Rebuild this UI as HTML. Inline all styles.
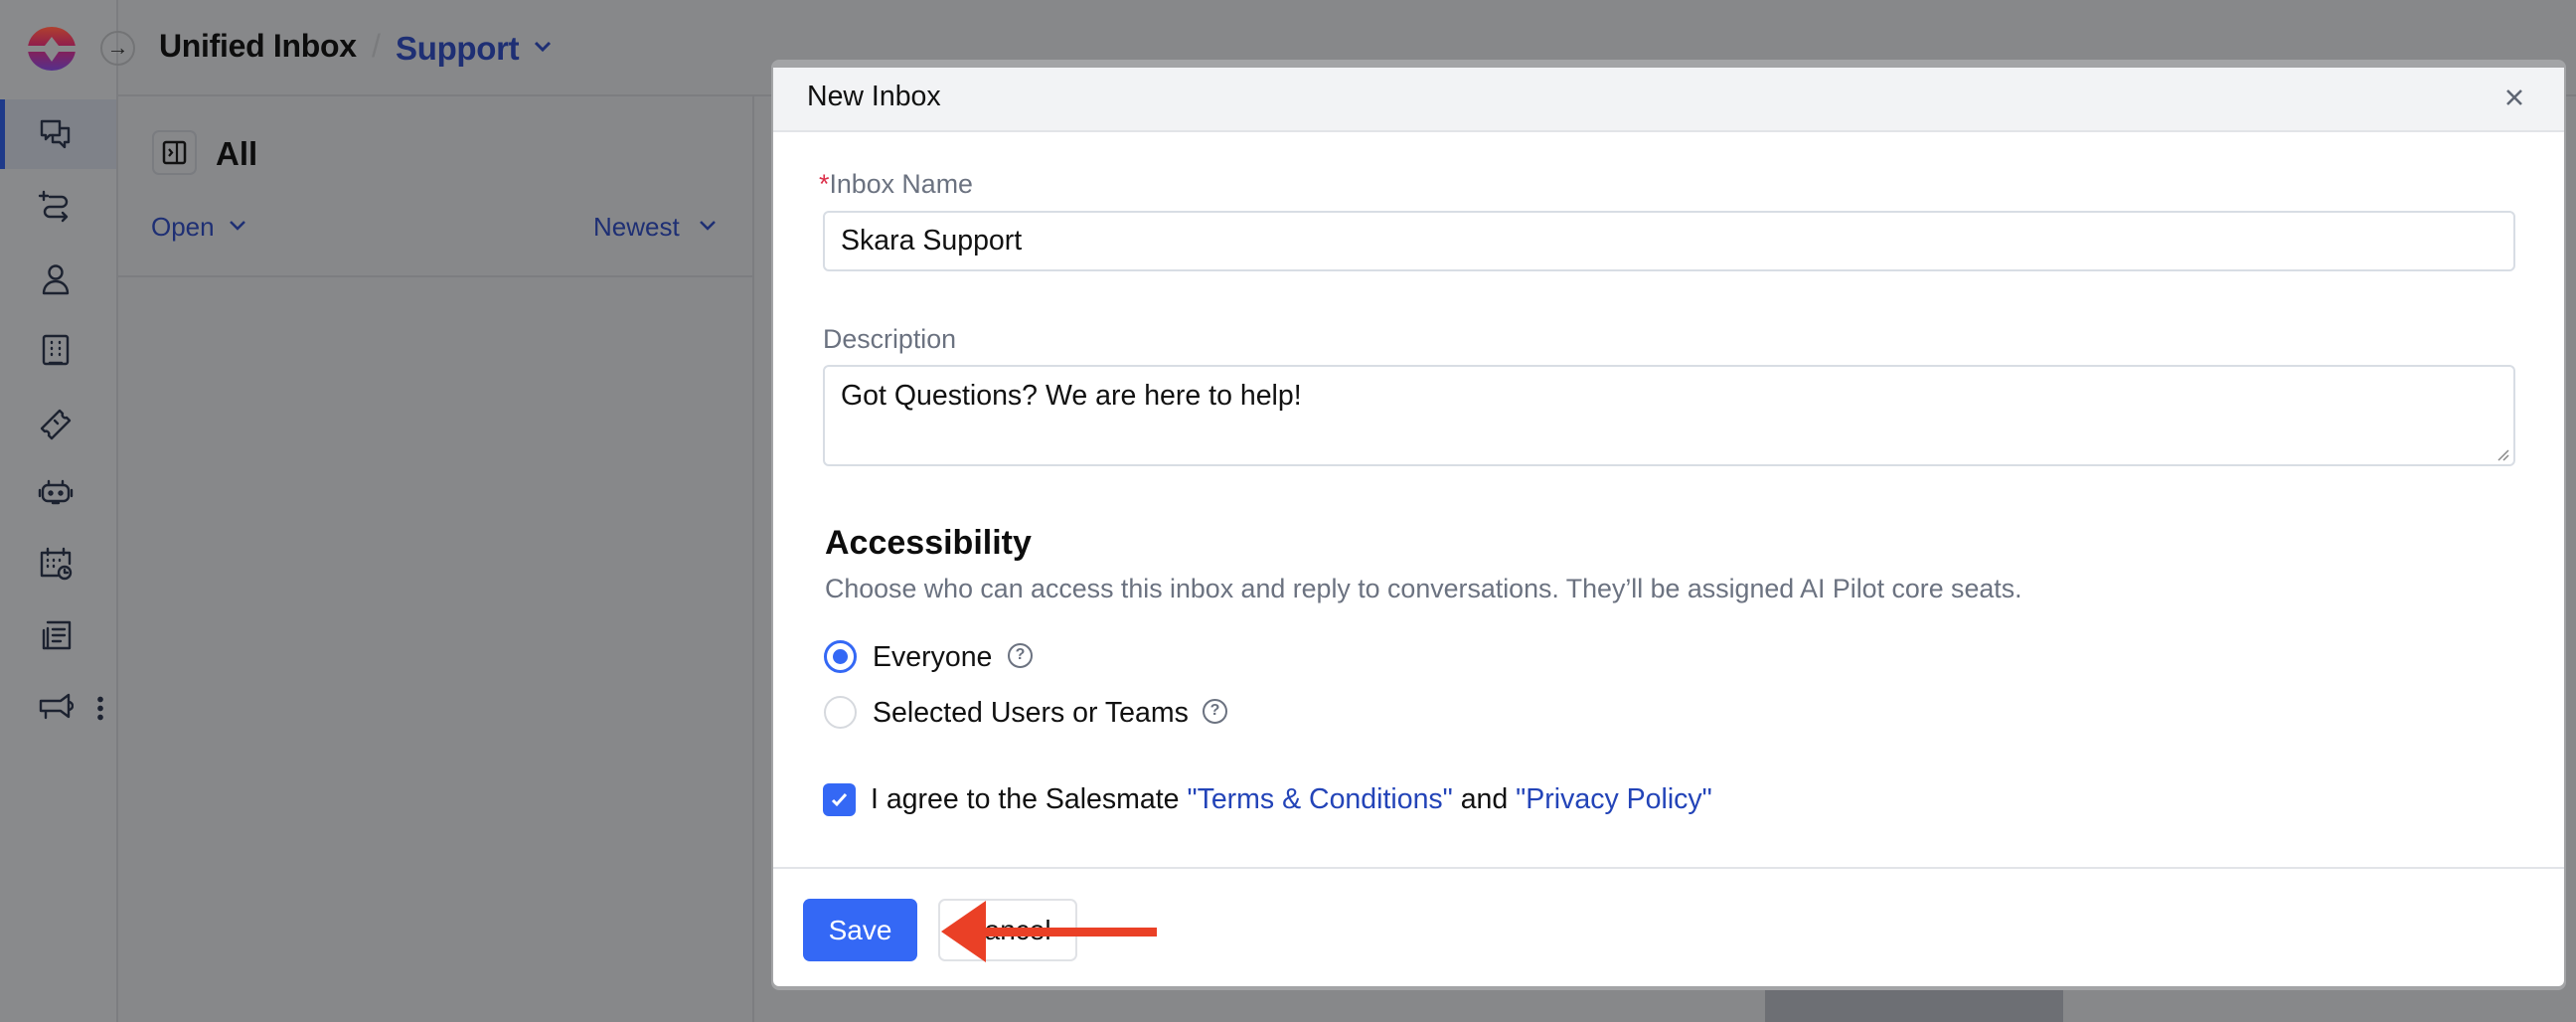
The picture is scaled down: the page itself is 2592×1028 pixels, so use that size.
<!DOCTYPE html>
<html><head><meta charset="utf-8"><style>
*{box-sizing:border-box;margin:0;padding:0}
body{width:2592px;height:1028px;overflow:hidden;background:#87888a;font-family:"Liberation Sans",sans-serif;position:relative}
.a{position:absolute}
.ic{position:absolute;left:38px;width:36px;height:36px}
.ic svg{width:36px;height:36px;fill:none;stroke:#1c2230;stroke-width:2.4;stroke-linecap:round;stroke-linejoin:round}
.lbl{color:#6b7280;font-size:26.8px}
.inp{border:2px solid #d8dde4;border-radius:6px;background:#fff}
.txt{color:#111;font-size:28.5px}
</style></head><body>
<div class="a" style="left:0;top:0;width:119px;height:1028px;background:#898a8c;border-right:2px solid #7c7d80"></div>
<div class="a" style="left:0;top:100px;width:117px;height:70px;background:#7f8289"></div>
<div class="a" style="left:0;top:100px;width:5px;height:70px;background:#1e3a8a"></div>
<svg class="a" style="left:27px;top:25px" width="50" height="48" viewBox="0 0 50 48">
<defs><linearGradient id="g" x1="0" y1="0" x2="0" y2="1"><stop offset="0" stop-color="#b0402e"/><stop offset=".45" stop-color="#8e1d4e"/><stop offset="1" stop-color="#55308c"/></linearGradient></defs>
<ellipse cx="25" cy="24" rx="24" ry="22" fill="url(#g)"/>
<path d="M0 21h18l7-9 7 9h18v6H32l-7 10-7-10H0z" fill="#898a8c"/></svg>
<div class="a" style="left:101px;top:31px;width:35px;height:35px;border:2px solid #737476;border-radius:50%;color:#222;font-size:22px;line-height:30px;text-align:center">→</div>
<div class="a" style="left:119px;top:95px;width:2473px;height:2px;background:#7c7d80"></div>
<div class="a" style="left:160px;top:28px;font-size:32px;font-weight:bold;color:#0d0d0d;letter-spacing:-0.3px">Unified Inbox</div>
<div class="a" style="left:374px;top:28px;font-size:32px;color:#7a7b7d">/</div>
<div class="a" style="left:398px;top:30px;font-size:33px;font-weight:bold;color:#1e2f74;letter-spacing:-0.3px">Support</div>
<svg class="a" style="left:536px;top:40px" width="20" height="14" viewBox="0 0 20 14"><path d="M3 3l7 7 7-7" stroke="#1e2f74" stroke-width="3" fill="none"/></svg>
<div class="a" style="left:757px;top:97px;width:2px;height:931px;background:#7c7d80"></div>
<div class="a" style="left:119px;top:277px;width:638px;height:2px;background:#7c7d80"></div>
<div class="a" style="left:153px;top:131px;width:45px;height:45px;border:2px solid #7a7c80;border-radius:7px"></div>
<svg class="a" style="left:163px;top:141px" width="25" height="25" viewBox="0 0 25 25"><rect x="2" y="2" width="21" height="21" rx="2" stroke="#111" stroke-width="2.5" fill="none"/><path d="M15 2v21M7 9l3 3.5-3 3.5" stroke="#111" stroke-width="2.2" fill="none"/></svg>
<div class="a" style="left:217px;top:136px;font-size:33px;font-weight:bold;color:#0d0d0d">All</div>
<div class="a" style="left:152px;top:213px;font-size:26px;color:#1e2f74">Open</div>
<svg class="a" style="left:229px;top:220px" width="20" height="14" viewBox="0 0 20 14"><path d="M3 3l7 7 7-7" stroke="#1e2f74" stroke-width="2.5" fill="none"/></svg>
<div class="a" style="left:597px;top:213px;font-size:26px;color:#1e2f74">Newest</div>
<svg class="a" style="left:702px;top:220px" width="20" height="14" viewBox="0 0 20 14"><path d="M3 3l7 7 7-7" stroke="#1e2f74" stroke-width="2.5" fill="none"/></svg>
<div class="a" style="left:1776px;top:996px;width:300px;height:32px;background:#6d6f74"></div>
<div class="ic" style="top:118px"><svg viewBox="0 0 36 36"><path d="M4 4h18v14H12l-4 4v-4H4z"/><path d="M22 11h9v14h-4v5l-5-5h-7v-7"/></svg></div>
<div class="ic" style="top:190px"><svg viewBox="0 0 36 36"><path d="M6 3v8M2 7h8M12 8h12a5 5 0 010 10H12a5 5 0 000 10h16M25 24l4 4-4 4"/></svg></div>
<div class="ic" style="top:263px"><svg viewBox="0 0 36 36"><circle cx="18" cy="11" r="6.5"/><path d="M6 32c0-7 5-12 12-12s12 5 12 12z"/></svg></div>
<div class="ic" style="top:334px"><svg viewBox="0 0 36 36"><rect x="6" y="4" width="24" height="28" rx="2"/><path d="M14 10v1M22 10v1M14 16v1M22 16v1M14 22v1M22 22v1M12 31h12"/></svg></div>
<div class="ic" style="top:407px"><svg viewBox="0 0 36 36"><path d="M4 24L22 6l3 3a3 3 0 004 4l3 3-18 18-3-3a3 3 0 00-4-4z"/><path d="M17 16l3 3"/></svg></div>
<div class="ic" style="top:478px"><svg viewBox="0 0 36 36"><rect x="5" y="10" width="26" height="16" rx="5"/><path d="M11 6v4M25 6v4M2 15v6M34 15v6M15 28h6"/><circle cx="13" cy="18" r="1.5"/><circle cx="23" cy="18" r="1.5"/></svg></div>
<div class="ic" style="top:549px"><svg viewBox="0 0 36 36"><path d="M20 30H4V7h28v11M10 3v6M26 3v6"/><path d="M10 14v1M16 14v1M22 14v1M10 20v1M16 20v1"/><circle cx="27" cy="27" r="6"/><path d="M27 24v3h3"/></svg></div>
<div class="ic" style="top:622px"><svg viewBox="0 0 36 36"><path d="M10 4h22v26H6"/><path d="M10 10v20M6 12v18M15 11h12M15 17h12M15 23h8"/></svg></div>
<div class="ic" style="top:693px"><svg viewBox="0 0 36 36"><path d="M3 12h20l8-6v22l-8-6H3zM8 22v7M31 13a4 4 0 010 8"/></svg></div>
<div class="a" style="left:98px;top:699px;width:6px;height:26px;background:radial-gradient(circle,#1c2230 2.6px,transparent 3px) 0 0/6px 9px repeat-y"></div>
<div class="a" style="left:776px;top:60px;width:1806px;height:936px;background:#a3a4a6;border-radius:8px"></div>
<div class="a" style="left:778px;top:68px;width:1802px;height:924px;background:#fff;border-radius:0 0 6px 6px;overflow:hidden">
 <div class="a" style="left:0;top:0;width:1802px;height:65px;background:#f2f3f5;border-bottom:2px solid #e2e4e8"></div>
 <div class="a" style="left:34px;top:13px;font-size:28.5px;color:#111">New Inbox</div>
 <svg class="a" style="left:1741px;top:19px" width="22" height="22" viewBox="0 0 22 22"><path d="M4 4l14 14M18 4L4 18" stroke="#5f6673" stroke-width="2.6"/></svg>
 <div class="a lbl" style="left:46px;top:102px"><span style="color:#dc2f4a">*</span>Inbox Name</div>
 <div class="a inp" style="left:50px;top:144px;width:1703px;height:61px"></div>
 <div class="a txt" style="left:68px;top:158px">Skara Support</div>
 <div class="a lbl" style="left:50px;top:258px">Description</div>
 <div class="a inp" style="left:50px;top:299px;width:1703px;height:102px"></div>
 <div class="a txt" style="left:68px;top:314px">Got Questions? We are here to help!</div>
 <svg class="a" style="left:1733px;top:382px" width="14" height="14" viewBox="0 0 14 14"><path d="M13 3L3 13M13 8l-5 5" stroke="#888" stroke-width="1.5"/></svg>
 <div class="a" style="left:52px;top:459px;font-size:34px;font-weight:bold;color:#0d0d0d">Accessibility</div>
 <div class="a lbl" style="left:52px;top:509px">Choose who can access this inbox and reply to conversations. They’ll be assigned AI Pilot core seats.</div>
 <div class="a" style="left:51px;top:576px;width:33px;height:33px;border:3px solid #3468f5;border-radius:50%"></div>
 <div class="a" style="left:60px;top:585px;width:15px;height:15px;background:#3468f5;border-radius:50%"></div>
 <div class="a txt" style="left:100px;top:577px">Everyone</div>
 <div class="a" style="left:236px;top:579px;width:25px;height:25px;border:2.5px solid #6b7280;border-radius:50%;font-size:16px;line-height:20px;text-align:center;color:#6b7280;font-weight:bold">?</div>
 <div class="a" style="left:51px;top:632px;width:33px;height:33px;border:2px solid #d6d9de;border-radius:50%"></div>
 <div class="a txt" style="left:100px;top:633px">Selected Users or Teams</div>
 <div class="a" style="left:432px;top:635px;width:25px;height:25px;border:2.5px solid #6b7280;border-radius:50%;font-size:16px;line-height:20px;text-align:center;color:#6b7280;font-weight:bold">?</div>
 <div class="a" style="left:50px;top:720px;width:33px;height:33px;background:#3468f5;border-radius:6px"></div>
 <svg class="a" style="left:55px;top:725px" width="23" height="23" viewBox="0 0 23 23"><path d="M5 12l4 4 9-10" stroke="#fff" stroke-width="3" fill="none"/></svg>
 <div class="a txt" style="left:98px;top:720px">I agree to the Salesmate <span style="color:#2344b8">"Terms &amp; Conditions"</span> and <span style="color:#2344b8">"Privacy Policy"</span></div>
 <div class="a" style="left:0;top:804px;width:1802px;height:2px;background:#e2e4e8"></div>
 <div class="a" style="left:30px;top:836px;width:115px;height:63px;background:#3468f5;border-radius:7px;color:#fff;font-size:28px;line-height:63px;text-align:center">Save</div>
 <div class="a" style="left:166px;top:836px;width:140px;height:63px;border:2px solid #e0e2e6;border-radius:7px;color:#111;font-size:28px;line-height:59px;text-align:center">Cancel</div>
 <svg class="a" style="left:166px;top:836px" width="230" height="66" viewBox="0 0 230 66"><path d="M3 33L48 2v27h172v9H48v26z" fill="#ea4026"/></svg>
</div>
</body></html>
